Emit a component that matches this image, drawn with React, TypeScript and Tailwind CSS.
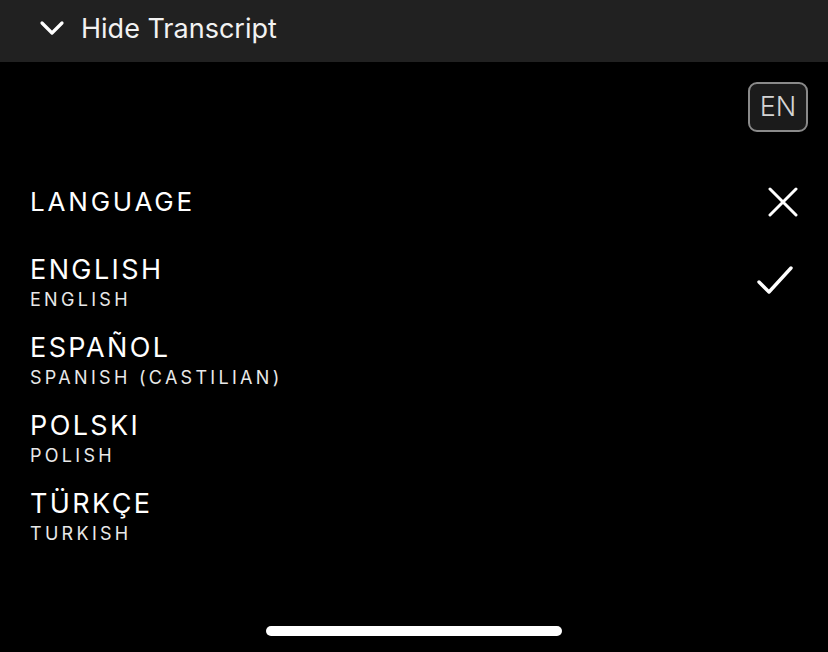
const languages = [
  { name: "ENGLISH", english: "ENGLISH", selected: true },
  { name: "ESPAÑOL", english: "SPANISH (CASTILIAN)" },
  { name: "POLSKI", english: "POLISH" },
  { name: "TÜRKÇE", english: "TURKISH" },
]

export default function App() {
  return (
    <div className="w-[828px] h-[652px] bg-black text-white flex flex-col font-['Inter','Liberation_Sans',sans-serif] overflow-hidden">
      <header className="h-[62px] bg-[#212121] flex items-center pl-[39px] gap-[16px]">
        <svg width="26" height="16" viewBox="0 0 26 16" fill="none" stroke="white" strokeWidth="3.2" strokeLinecap="round" strokeLinejoin="round" className="mb-[6px]">
          <path d="M3 3l10 10L23 3" />
        </svg>
        <span className="text-[27px] leading-none text-[#f2f2f2] mb-[6px]">Hide Transcript</span>
      </header>

      <div className="flex justify-end pt-[20px] pr-[20px]">
        <div className="w-[60px] h-[50px] rounded-[9px] border-2 border-[#8a8a8a] bg-[#1b1b1b] flex items-center justify-center text-[27px] font-light text-[#d4d4d4]">
          EN
        </div>
      </div>

      <div className="flex items-center justify-between pl-[30px] pr-[30px] mt-[55px]">
        <h2 className="text-[26px] tracking-[2.8px] leading-none">LANGUAGE</h2>
        <svg width="30" height="30" viewBox="0 0 30 30" stroke="white" strokeWidth="3" strokeLinecap="round">
          <path d="M2 2l26 26M28 2L2 28" />
        </svg>
      </div>

      <ul className="flex flex-col gap-[20px] pl-[30px] pr-[34px] mt-[37px]">
        {languages.map((l) => (
          <li key={l.name} className="flex items-center justify-between">
            <div className="flex flex-col">
              <span className="text-[27px] leading-[32px] tracking-[2.4px]">{l.name}</span>
              <span className="text-[18px] leading-[24px] tracking-[3.3px] text-[#e8e8e8] mt-[2px]">{l.english}</span>
            </div>
            {l.selected && (
              <svg width="38" height="30" viewBox="0 0 38 30" fill="none" stroke="white" strokeWidth="3.4" strokeLinecap="round" strokeLinejoin="round" className="mb-[6px]">
                <path d="M3 17l10 10L35 3" />
              </svg>
            )}
          </li>
        ))}
      </ul>

      <div className="mt-auto mb-[16px] flex justify-center">
        <div className="w-[296px] h-[10px] rounded-full bg-white" />
      </div>
    </div>
  )
}
